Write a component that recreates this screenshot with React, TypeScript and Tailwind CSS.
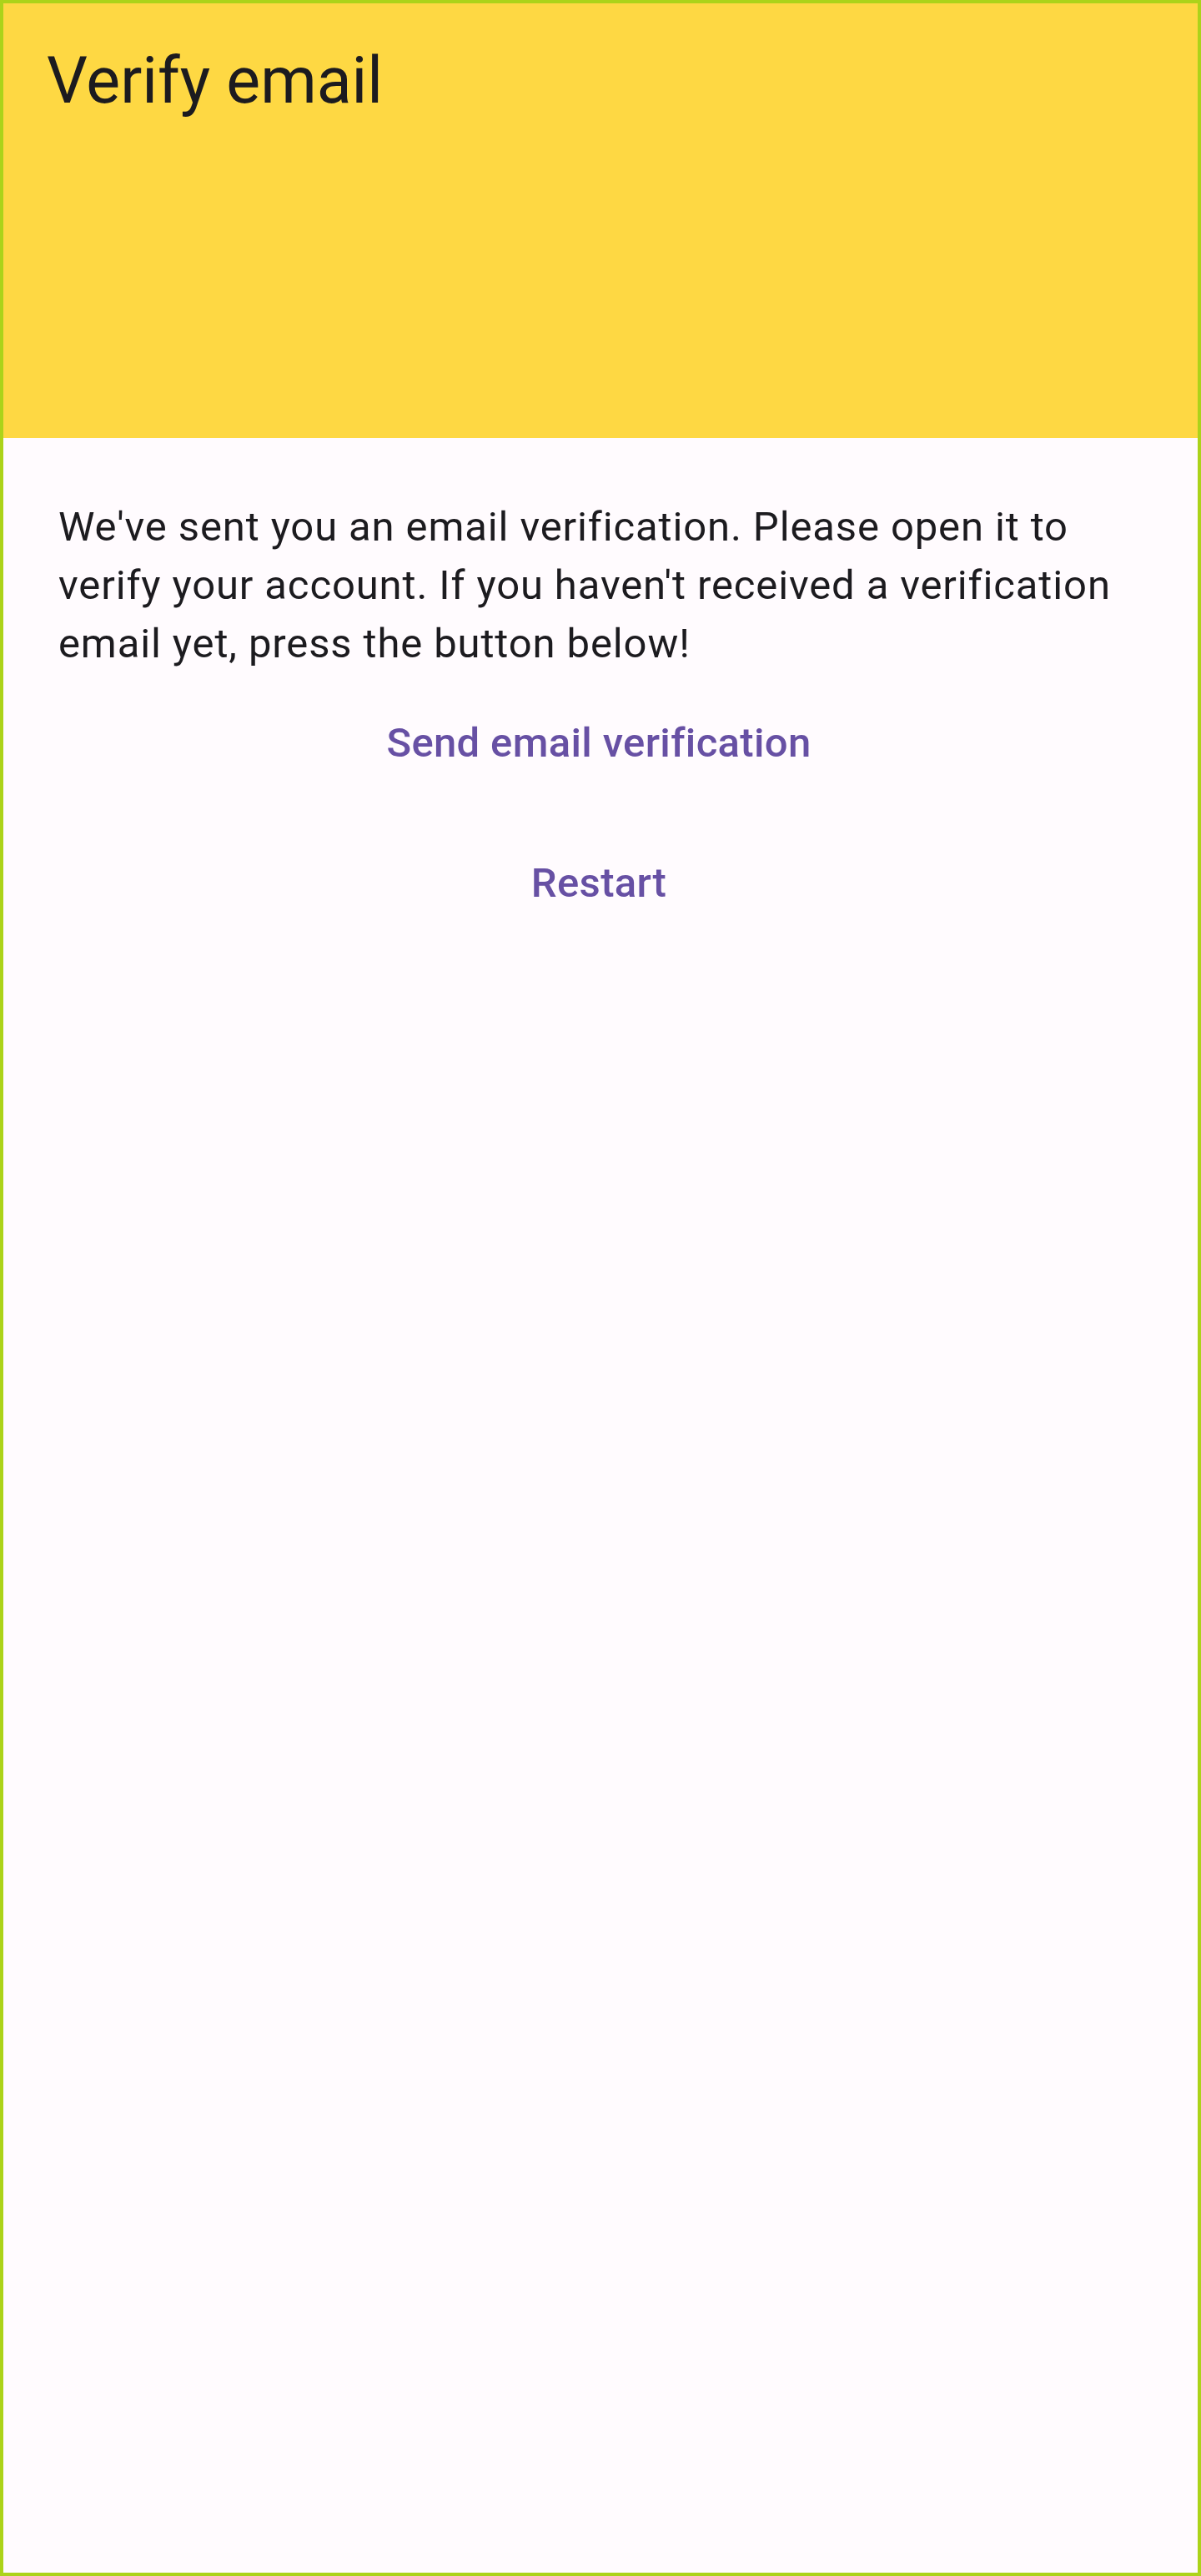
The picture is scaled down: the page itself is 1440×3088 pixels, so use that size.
import React from "react";

const App: React.FC = () => {
  return (
    <div
      className="h-[3088px] w-[1440px] border-4 border-[#acd31a] bg-[#fffbfe] flex flex-col"
      style={{ fontFamily: "Roboto, 'Noto Sans', sans-serif" }}
    >
      {/* App bar */}
      <header className="h-[521px] shrink-0 bg-[#fed843] pl-[52px] pt-[55px]">
        <h1 className="text-[77px] leading-none font-normal text-[#1c1b1f]">Verify email</h1>
      </header>

      {/* Body */}
      <main className="flex flex-col pl-[66px] pr-[70px] pt-[72px]">
        <p className="text-[49px] leading-[70px] tracking-[0.875px] text-[#1c1b1f]">
          We've sent you an email verification. Please open it to verify your account. If you haven't received a
          verification email yet, press the button below!
        </p>
        <button className="h-[168px] flex items-center justify-center text-[49px] leading-[70px] font-medium tracking-[0.35px] text-[#6750a4]">
          Send email verification
        </button>
        <button className="h-[168px] flex items-center justify-center text-[49px] leading-[70px] font-medium tracking-[0.35px] text-[#6750a4]">
          Restart
        </button>
      </main>
    </div>
  );
};

export default App;
